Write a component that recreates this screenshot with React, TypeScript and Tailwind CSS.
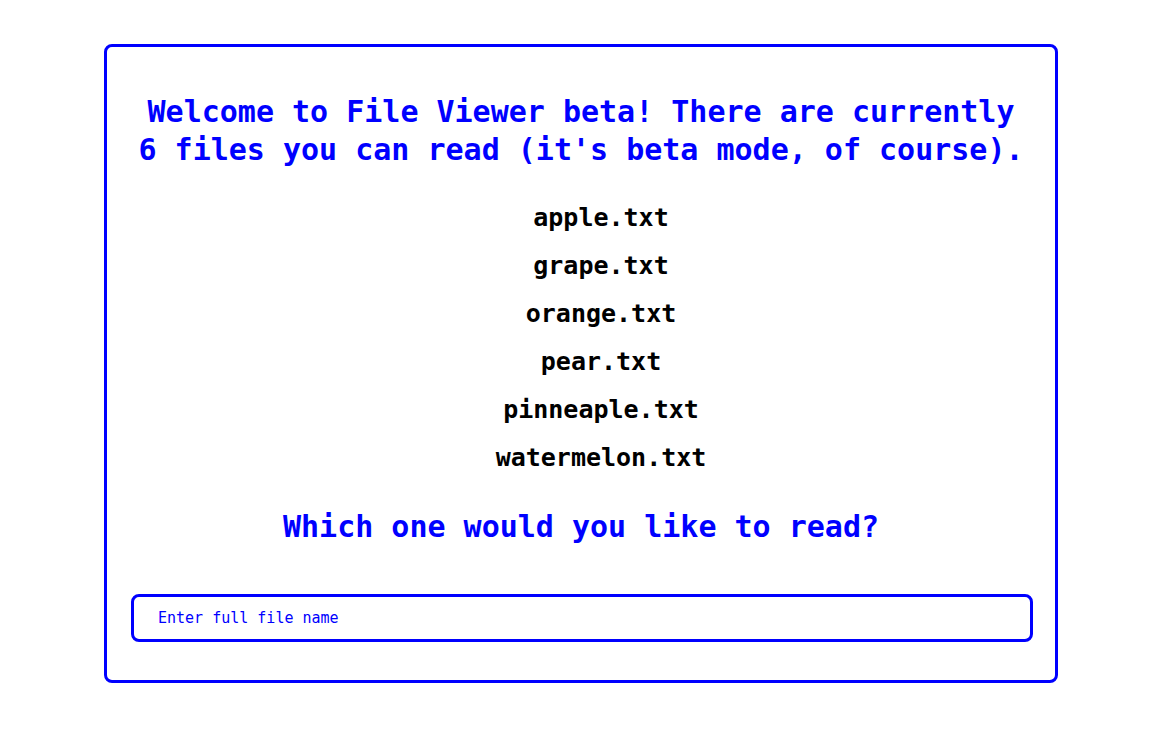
import React from 'react';

const FILES = ['apple.txt', 'grape.txt', 'orange.txt', 'pear.txt', 'pinneaple.txt', 'watermelon.txt'];

const App: React.FC = () => {
  return (
    <div className="min-h-screen bg-white pt-[44px] font-['DejaVu_Sans_Mono',monospace]">
      <div className="ml-[104px] w-[954px] rounded-lg border-[3px] border-[#0000ff] px-6 pt-[46px] pb-[38px]">
        <h1 className="text-center text-[30px] leading-[38px] font-bold text-[#0000ff]">
          Welcome to File Viewer beta! There are currently 6 files you can read (it's beta mode, of course).
        </h1>
        <ul className="mt-[25px] flex flex-col items-center pl-10">
          {FILES.map((f) => (
            <li key={f} className="text-[25px] leading-[48px] font-bold text-black">
              {f}
            </li>
          ))}
        </ul>
        <h2 className="mt-[26px] text-center text-[30px] leading-[38px] font-bold text-[#0000ff]">
          Which one would you like to read?
        </h2>
        <input
          type="text"
          placeholder="Enter full file name"
          className="mt-[48px] block h-[48px] w-[calc(100%+2px)] rounded-lg border-[3px] border-[#0000ff] px-6 text-[15px] text-[#0000ff] placeholder:text-[#0000ff] outline-none"
        />
      </div>
    </div>
  );
};

export default App;
